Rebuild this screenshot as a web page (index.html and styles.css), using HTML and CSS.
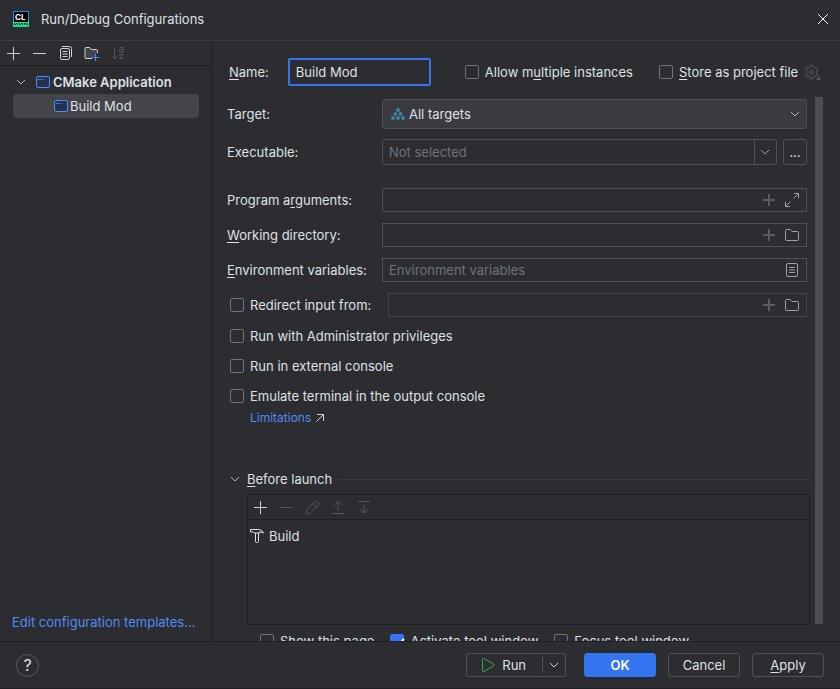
FILE: index.html
```html
<!DOCTYPE html>
<html lang="en">
    <head>
        <meta charset="UTF-8" />
        <meta content="width=device-width, initial-scale=1.0" name="viewport" />
        <title>Run/Debug Configurations</title>
        <link rel="stylesheet" href="styles.css">
    </head>

    <body>
        <!-- shared icons -->
        <svg class="sprite">
            <symbol id="plus" viewBox="0 0 16 16"><path d="M8.500 2v13M2 8.500h13" /></symbol>
            <symbol id="minus" viewBox="0 0 16 16"><path d="M2 8.500h13" /></symbol>
            <symbol id="plus-small" viewBox="0 0 16 16"><path d="M8 2v12M2 8h12" stroke-width="2" /></symbol>
            <symbol id="chevron" viewBox="0 0 16 16"><path d="M4 6l4 4 4-4" /></symbol>
            <symbol id="folder" viewBox="0 0 16 16"><path d="M1.500 3.500a1 1 0 0 1 1-1h3.700l1.800 2h5.500a1 1 0 0 1 1 1v7a1 1 0 0 1-1 1h-11a1 1 0 0 1-1-1z" /></symbol>
            <symbol id="app" viewBox="0 0 16 16">
                <rect x="1.500" y="2.500" width="13" height="11" rx="1.500" fill="#25324d" />
                <path d="M3 5.500h1.500M5.500 5.500H7M8 5.500h1" />
            </symbol>
        </svg>

        <header class="titlebar">
            <svg class="logo" viewBox="0 0 16 16">
                <rect width="16" height="16" fill="#0f95e8" />
                <path d="M0 16V10l16-2v8z" fill="#21d789" />
                <rect x="1" y="1" width="14" height="10" fill="#000" />
                <text x="2" y="9">CL</text>
                <path d="M1 13.500h2M4 13.500h1M6 13.500h2M9 13.500h1M11 13.500h1M13 13.500h2M1 12.500h1M3 12.500h2M6 12.500h1M8 12.500h2M11 12.500h3" stroke="#0b5a3c" />
            </svg>
            <h1>Run/Debug Configurations</h1>
            <button class="icon-btn close" aria-label="Close">
                <svg class="icon" viewBox="0 0 16 16"><path d="m3 3 10 10M13 3 3 13" /></svg>
            </button>
        </header>

        <div class="content">
            <aside class="sidebar">
                <div class="toolbar">
                    <button class="icon-btn" aria-label="Add"><svg class="icon"><use href="#plus" /></svg></button>
                    <button class="icon-btn" aria-label="Remove"><svg class="icon"><use href="#minus" /></svg></button>
                    <button class="icon-btn" aria-label="Copy">
                        <svg class="icon" viewBox="0 0 16 16">
                            <path d="M5 1.500h7.500a2 2 0 0 1 2 2V12" />
                            <rect x="3.500" y="3.500" width="9" height="11" rx="1.500" />
                            <path d="M5.500 6.500h5M5.500 9h5M5.500 11.500h5" />
                        </svg>
                    </button>
                    <button class="icon-btn" aria-label="New folder">
                        <svg class="icon" viewBox="0 0 16 16">
                            <path d="M9 13.500H3a1 1 0 0 1-1-1v-9a1 1 0 0 1 1-1h3.700l1.800 2h5a1 1 0 0 1 1 1V8" fill="#43454a" />
                            <path d="M12.500 9v7M9 12.500h7" stroke="#548af7" />
                        </svg>
                    </button>
                    <button class="icon-btn" aria-label="Sort configurations" disabled>
                        <svg class="icon" viewBox="0 0 16 16">
                            <path d="M5.500 3v11M2 10.500 5.500 14 9 10.500M10.500 2.500H14V7h-3.500V4.700H14M10.500 9.500H14l-3.500 4h4" />
                        </svg>
                    </button>
                </div>
                <ul class="tree">
                    <li class="group">
                        <svg class="icon arrow"><use href="#chevron" /></svg>
                        <svg class="icon app"><use href="#app" /></svg>
                        CMake Application
                    </li>
                    <li class="selected">
                        <svg class="icon app"><use href="#app" /></svg>
                        Build Mod
                    </li>
                </ul>
                <a class="templates" href="#">Edit configuration templates...</a>
            </aside>

            <main class="editor">
                <div class="name-row">
                    <label for="name"><u>N</u>ame:</label>
                    <input class="name" id="name" type="text" value="Build Mod" />
                    <label class="check multiple"><input type="checkbox" />Allow m<u>u</u>ltiple instances</label>
                    <label class="check"><input type="checkbox" /><span><u>S</u>tore as project file</span></label>
                    <button class="icon-btn gear" aria-label="Storage settings">
                        <svg class="icon" viewBox="0 0 16 16">
                            <path d="m6.300 1.500h2.400l.6 1.900 1.300.7 2-.4 1.200 2-1.400 1.500v1.600l1.400 1.500-1.200 2-2-.4-1.300.7-.6 1.900H6.300l-.6-1.900-1.300-.7-2 .4-1.200-2 1.400-1.500V7.200L1.200 5.700l1.200-2 2 .4 1.300-.7z" />
                            <circle cx="7.500" cy="8" r="2" />
                            <path d="M16 12v4h-4z" fill="currentColor" stroke="none" />
                        </svg>
                    </button>
                </div>

                <div class="scroll">
                    <div class="form">
                        <div class="row target">
                            <label for="target">Target:</label>
                            <div class="field combo">
                                <svg class="icon targets" viewBox="0 0 16 16">
                                    <circle cx="8" cy="4" r="2" /><circle cx="5.500" cy="8" r="2" /><circle cx="10.500" cy="8" r="2" />
                                    <circle cx="3" cy="12" r="2" /><circle cx="8" cy="12" r="2" /><circle cx="13" cy="12" r="2" />
                                </svg>
                                <select id="target"><option>All targets</option></select>
                                <svg class="icon"><use href="#chevron" /></svg>
                            </div>
                        </div>
                        <div class="row executable">
                            <label for="executable">Executable:</label>
                            <div class="field rounded">
                                <input id="executable" type="text" placeholder="Not selected" />
                                <button class="icon-btn drop" aria-label="Show executables"><svg class="icon"><use href="#chevron" /></svg></button>
                            </div>
                            <button class="btn more" aria-label="Browse">...</button>
                        </div>
                        <div class="row">
                            <label for="arguments">Program a<u>r</u>guments:</label>
                            <div class="field">
                                <input id="arguments" type="text" />
                                <button class="icon-btn faint" aria-label="Insert macro"><svg class="icon"><use href="#plus-small" /></svg></button>
                                <button class="icon-btn" aria-label="Expand">
                                    <svg class="icon" viewBox="0 0 16 16"><path d="M10 1.500h4.500V6M14 2 9.500 6.500M6 14.500H1.500V10M2 14l4.500-4.500" /></svg>
                                </button>
                            </div>
                        </div>
                        <div class="row">
                            <label for="directory"><u>W</u>orking directory:</label>
                            <div class="field">
                                <input id="directory" type="text" />
                                <button class="icon-btn faint" aria-label="Insert macro"><svg class="icon"><use href="#plus-small" /></svg></button>
                                <button class="icon-btn" aria-label="Browse"><svg class="icon"><use href="#folder" /></svg></button>
                            </div>
                        </div>
                        <div class="row">
                            <label for="environment"><u>E</u>nvironment variables:</label>
                            <div class="field">
                                <input id="environment" type="text" placeholder="Environment variables" />
                                <button class="icon-btn" aria-label="Edit variables">
                                    <svg class="icon" viewBox="0 0 16 16">
                                        <rect x="2.500" y="1.500" width="11" height="13" rx="1.500" />
                                        <path d="M5 5.500h6M5 8h6M5 10.500h6" />
                                    </svg>
                                </button>
                            </div>
                        </div>
                        <div class="row redirect">
                            <label class="check"><input type="checkbox" />Redirect input from:</label>
                            <div class="field disabled">
                                <input type="text" aria-label="Input file" disabled />
                                <button class="icon-btn faint" aria-label="Insert macro"><svg class="icon"><use href="#plus-small" /></svg></button>
                                <button class="icon-btn" aria-label="Browse"><svg class="icon"><use href="#folder" /></svg></button>
                            </div>
                        </div>
                        <div class="options">
                            <label class="check"><input type="checkbox" />Run with Administrator privileges</label>
                            <label class="check"><input type="checkbox" />Run in external console</label>
                            <label class="check"><input type="checkbox" />Emulate terminal in the output console</label>
                        </div>
                        <a class="limitations" href="#">Limitations
                            <svg viewBox="0 0 10 10"><path d="M2 1.500h6.500V8M8.500 1.500l-7 7" /></svg>
                        </a>
                    </div>

                    <section class="launch">
                        <h2>
                            <svg class="icon"><use href="#chevron" /></svg>
                            <span><u>B</u>efore launch</span>
                        </h2>
                        <div class="tasks">
                            <div class="toolbar">
                                <button class="icon-btn" aria-label="Add task"><svg class="icon"><use href="#plus" /></svg></button>
                                <button class="icon-btn" aria-label="Remove task" disabled><svg class="icon"><use href="#minus" /></svg></button>
                                <button class="icon-btn" aria-label="Edit task" disabled>
                                    <svg class="icon" viewBox="0 0 16 16"><path d="M2.500 14.500V11L11 2.500q1-1 2 0l1.500 1.500q1 1 0 2L6 14.500zM9 4.500 12.500 8" /></svg>
                                </button>
                                <button class="icon-btn" aria-label="Move up" disabled>
                                    <svg class="icon" viewBox="0 0 16 16"><path d="M2 14.500h12M8 12V2.500M4 6.500l4-4 4 4" /></svg>
                                </button>
                                <button class="icon-btn" aria-label="Move down" disabled>
                                    <svg class="icon" viewBox="0 0 16 16"><path d="M2 2.500h12M8 5v9M4 10l4 4 4-4" /></svg>
                                </button>
                            </div>
                            <ul>
                                <li>
                                    <svg class="icon" viewBox="0 0 16 16"><path d="M1.500 1.500h8q3.500 0 5 3.500-1.500-1-4-1v1h-5l-1-1h-3zM6.500 5v8.500q0 1 1 1h1q1 0 1-1V5" /></svg>
                                    Build
                                </li>
                            </ul>
                        </div>
                        <div class="after">
                            <label class="check"><input type="checkbox" />Show this page</label>
                            <label class="check"><input type="checkbox" checked />Activate tool window</label>
                            <label class="check"><input type="checkbox" />Focus tool window</label>
                        </div>
                    </section>
                    <div class="scrollbar"></div>
                </div>
            </main>
        </div>

        <footer class="footer">
            <button class="help" aria-label="Help">?</button>
            <div class="split">
                <button class="run">
                    <svg class="icon" viewBox="0 0 16 16"><path d="M2.500 2.500v11q0 1.500 1.500 1l9.500-5.500q1-1 0-2L4 1.500q-1.500-.5-1.500 1z" fill="#253627" /></svg>
                    Run
                </button>
                <button class="icon-btn" aria-label="More run options"><svg class="icon"><use href="#chevron" /></svg></button>
            </div>
            <button class="btn primary">OK</button>
            <button class="btn">Cancel</button>
            <button class="btn"><u>A</u>pply</button>
        </footer>
    </body>
</html>
```
FILE: styles.css
```css
* {
    box-sizing: border-box;
}

body {
    display: flex;
    flex-direction: column;
    height: 100vh;
    margin: 0;
    overflow: hidden;
    background-color: #2b2d30;
    border-bottom: 1px solid #1e1f22;
    color: #dfe1e5;
    font: 13px/16px Inter, "Liberation Sans", sans-serif;
}

h1,
h2 {
    margin: 0;
    font-size: 13px;
    font-weight: 400;
}
ul {
    margin: 0;
    padding: 0;
    list-style: none;
}
a {
    color: #548af7;
    text-decoration: none;
}
u {
    text-underline-offset: 2px;
    text-decoration-skip-ink: none;
}
button,
input,
select {
    margin: 0;
    padding: 0;
    border: 0;
    outline: 0;
    background: none;
    color: inherit;
    font: inherit;
}

/* icons */
.sprite {
    position: absolute;
    width: 0;
    height: 0;
}
.icon {
    display: block;
    flex: none;
    width: 16px;
    height: 16px;
    fill: none;
    stroke: currentColor;
}
.icon-btn {
    flex: none;
    color: #ced0d6;
}
.icon-btn:disabled {
    color: #55575b;
}
.app {
    color: #548af7;
}

/* title bar */
.titlebar {
    display: flex;
    align-items: center;
    gap: 12px;
    flex: none;
    height: 41px;
    padding: 0 9px 2px 13px;
    border-bottom: 1px solid #393b40;
}
.logo {
    width: 16px;
    height: 16px;
}
.logo text {
    fill: #fff;
    font-size: 8px;
    font-weight: 700;
}
.close {
    margin-left: auto;
    color: #fff;
}

.content {
    display: flex;
    flex: 1;
    min-height: 0;
}

/* configuration list */
.sidebar {
    display: flex;
    flex-direction: column;
    flex: none;
    width: 212px;
    border-right: 1px solid #1e1f22;
}
.toolbar {
    display: flex;
    align-items: center;
    gap: 10px;
    flex: none;
    height: 25px;
    padding: 0 5px 1px;
    border-bottom: 1px solid #1e1f22;
}
.tree {
    padding: 4px 12px 0 13px;
}
.tree li {
    display: flex;
    align-items: center;
    height: 24px;
    border-radius: 4px;
}
.tree .group {
    font-weight: 600;
}
.tree .app {
    margin-right: 2px;
}
.tree .arrow {
    margin-right: 6px;
    color: #b4b8bf;
}
.tree .selected {
    padding-left: 40px;
    background-color: #43454a;
}
.tree .selected .app {
    margin-right: 1px;
}
.templates {
    margin: auto 0 11px 12px;
}

/* editor */
.editor {
    display: flex;
    flex-direction: column;
    flex: 1;
    min-width: 0;
}
.name-row {
    display: flex;
    align-items: center;
    flex: none;
    height: 56px;
    padding: 6px 18px 0 17px;
}
.name {
    width: 143px;
    height: 28px;
    margin-left: 19px;
    padding: 0 6px;
    border: 2px solid #3574f0;
    border-radius: 2px;
}
.multiple {
    margin: 0 26px 0 34px;
}
.gear {
    margin-left: 6px;
    color: #5a5d63;
}
.check {
    display: flex;
    align-items: center;
    white-space: pre;
}
.check input {
    appearance: none;
    flex: none;
    width: 14px;
    height: 14px;
    margin-right: 6px;
    border: 1px solid #6f737a;
    border-radius: 2px;
}
.check input:checked {
    position: relative;
    background-color: #3574f0;
    border-color: #3574f0;
}
.check input:checked::after {
    content: "";
    position: absolute;
    left: 4px;
    top: 1px;
    width: 5px;
    height: 9px;
    border: solid #fff;
    border-width: 0 2px 2px 0;
    transform: rotate(40deg);
}

.scroll {
    position: relative;
    flex: 1;
    min-height: 0;
    overflow: hidden;
}
.scrollbar {
    position: absolute;
    top: 0;
    right: 17px;
    bottom: 17px;
    width: 8px;
    background-color: #4d4e51;
}
.form {
    padding: 2px 33px 0 15px;
}
.row {
    display: flex;
    align-items: center;
    margin-bottom: 11px;
}
.row > label {
    flex: none;
    width: 155px;
}
.row.target {
    margin-bottom: 10px;
}
.row.executable {
    margin-bottom: 23px;
}
.field {
    display: flex;
    align-items: center;
    gap: 7px;
    flex: 1;
    min-width: 0;
    height: 24px;
    padding: 0 6px;
    border: 1px solid #4e5157;
}
.field input {
    flex: 1;
    min-width: 0;
}
.field input::placeholder {
    color: #6f737a;
    opacity: 1;
}
.field .icon-btn {
    color: #9da0a8;
}
.field .faint {
    color: #5a5d63;
}
.field.disabled {
    border-color: #43454a;
}
.combo {
    position: relative;
    gap: 3px;
    height: 30px;
    padding: 0 3px 0 7px;
    background-color: #393b40;
    border-radius: 3px;
    color: #b4b8bf;
}
.combo select {
    appearance: none;
    flex: 1;
    color: #dfe1e5;
}
.targets {
    fill: #3d83a0;
    stroke: none;
}
.rounded {
    height: 26px;
    padding-right: 0;
    border-radius: 3px;
}
.field .drop {
    display: flex;
    align-items: center;
    align-self: stretch;
    padding: 0 3px 0 2px;
    border-left: 1px solid #4e5157;
}
.row.redirect {
    margin-bottom: 7px;
}
.redirect .check {
    width: 161px;
    padding-left: 3px;
}
.options {
    display: flex;
    flex-direction: column;
    align-items: flex-start;
    gap: 6px;
    padding-left: 3px;
}
.options .check {
    height: 24px;
}
.limitations {
    display: block;
    margin: 2px 0 0 23px;
    font-size: 12px;
}
.limitations svg {
    width: 10px;
    height: 10px;
    fill: none;
    stroke: #ced0d6;
    vertical-align: -1px;
}

/* before launch */
.launch {
    padding: 45px 30px 0 15px;
}
.launch h2 {
    display: flex;
    align-items: center;
    gap: 4px;
}
.launch h2 .icon {
    color: #b4b8bf;
}
.launch h2::after {
    content: "";
    flex: 1;
    height: 1px;
    margin-left: 2px;
    background-color: #393b40;
}
.tasks {
    height: 131px;
    margin: 7px 0 0 20px;
    border: 1px solid #1e1f22;
}
.tasks .toolbar {
    padding: 0 4px 1px;
}
.tasks li {
    display: flex;
    align-items: center;
    gap: 4px;
    height: 24px;
    margin: 4px 1px;
}
.after {
    display: flex;
    gap: 16px;
    margin: 8px 0 0 33px;
}

/* buttons */
.footer {
    display: flex;
    align-items: center;
    gap: 12px;
    flex: none;
    height: 47px;
    padding: 0 16px;
    border-top: 1px solid #1e1f22;
}
.help {
    width: 23px;
    height: 23px;
    margin-right: auto;
    border: 1px solid #5a5d63;
    border-radius: 50%;
    font-size: 16px;
}
.btn {
    width: 72px;
    height: 24px;
    border: 1px solid #4e5157;
    border-radius: 3px;
}
.primary {
    background-color: #3574f0;
    border-color: #3574f0;
    color: #fff;
    font-weight: 600;
}
.more {
    width: 24px;
    height: 26px;
    margin-left: 6px;
}
.split {
    display: flex;
    align-items: center;
    height: 24px;
    margin-right: 6px;
    padding: 0 3px 0 13px;
    border: 1px solid #4e5157;
    border-radius: 3px;
}
.run {
    display: flex;
    align-items: center;
    gap: 6px;
    padding-right: 16px;
}
.run .icon {
    color: #57965c;
}
.split .icon-btn {
    padding-left: 3px;
    border-left: 1px solid #4e5157;
}
```
